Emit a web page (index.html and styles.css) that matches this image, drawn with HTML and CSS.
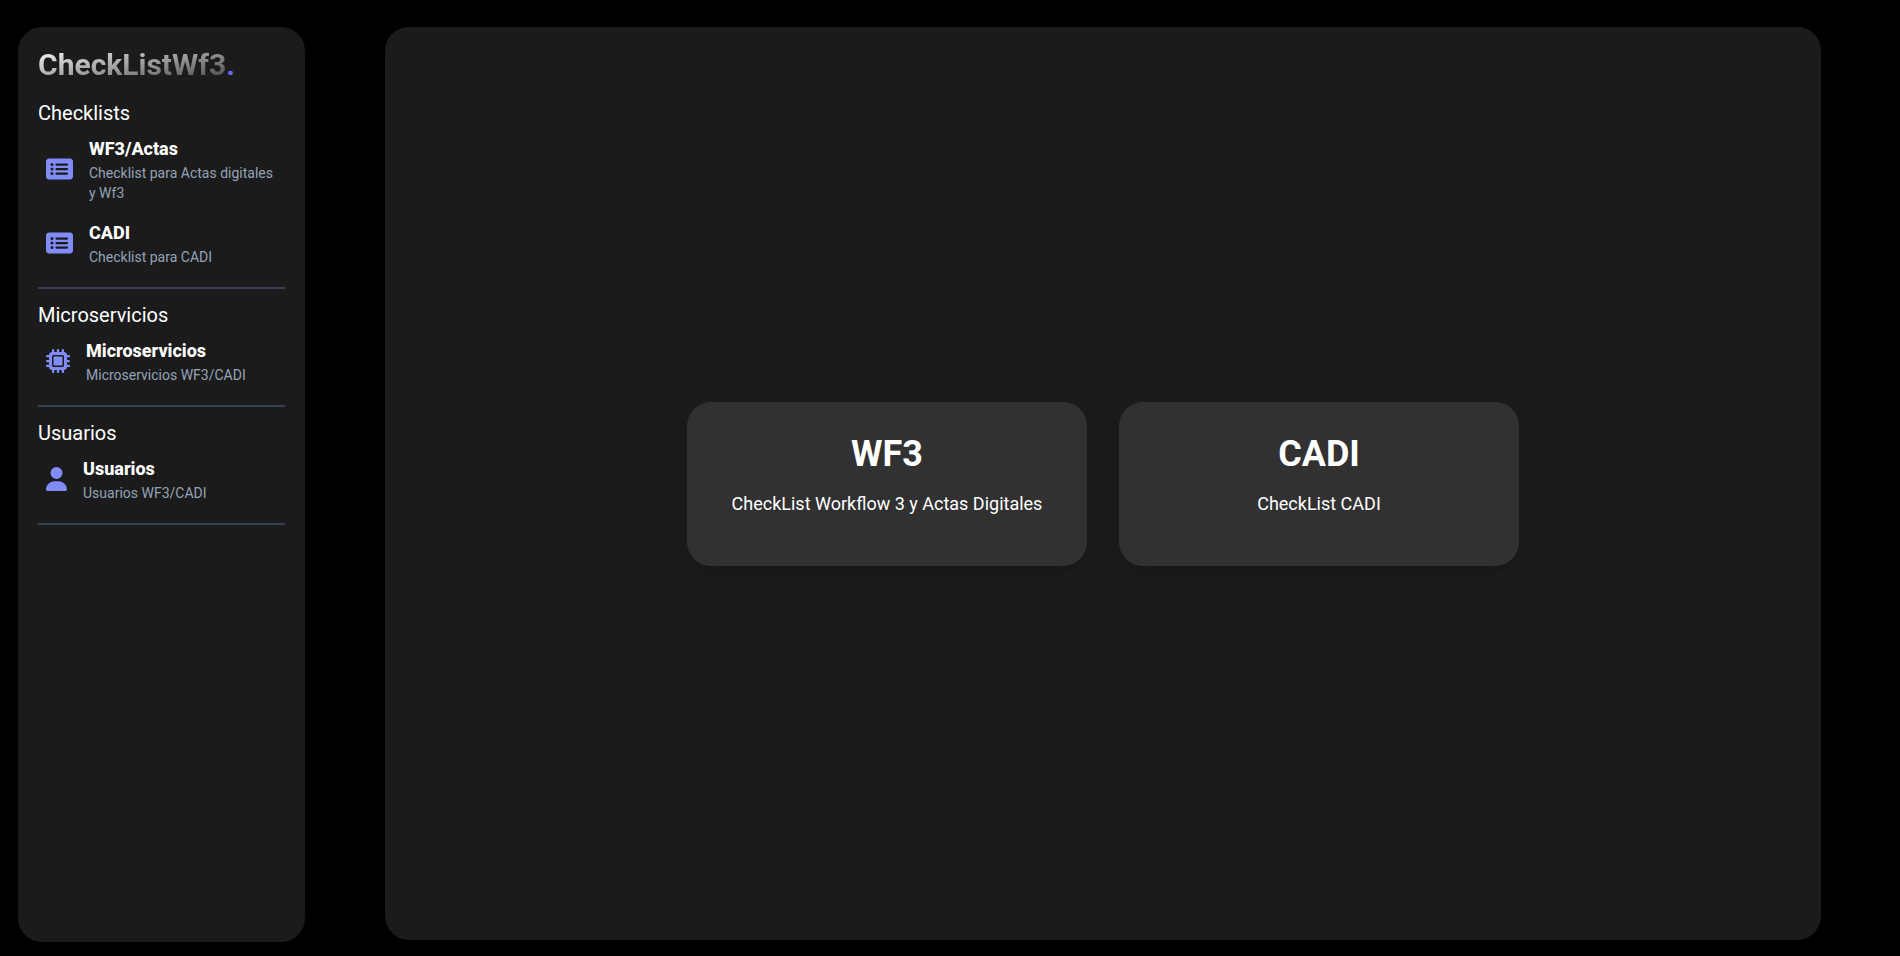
FILE: index.html
```html
<!DOCTYPE html>
<html lang="es">
<head>
<meta charset="utf-8">
<meta name="viewport" content="width=device-width, initial-scale=1">
<title>CheckListWf3</title>
<link rel="stylesheet" href="styles.css">
</head>
<body>
<svg class="sprite" aria-hidden="true">
  <symbol id="icon-list" viewBox="0 0 576 512"><path d="M0 96C0 60.7 28.7 32 64 32H512c35.3 0 64 28.7 64 64V416c0 35.3-28.7 64-64 64H64c-35.3 0-64-28.7-64-64V96zM128 288a32 32 0 1 0 0-64 32 32 0 1 0 0 64zm32-128a32 32 0 1 0 -64 0 32 32 0 1 0 64 0zM128 384a32 32 0 1 0 0-64 32 32 0 1 0 0 64zm96-248c-13.3 0-24 10.7-24 24s10.7 24 24 24H448c13.3 0 24-10.7 24-24s-10.7-24-24-24H224zm0 96c-13.3 0-24 10.7-24 24s10.7 24 24 24H448c13.3 0 24-10.7 24-24s-10.7-24-24-24H224zm0 96c-13.3 0-24 10.7-24 24s10.7 24 24 24H448c13.3 0 24-10.7 24-24s-10.7-24-24-24H224z"/></symbol>
  <symbol id="icon-chip" viewBox="0 0 512 512"><path d="M176 24c0-13.3-10.7-24-24-24s-24 10.7-24 24V64c-35.3 0-64 28.7-64 64H24c-13.3 0-24 10.7-24 24s10.7 24 24 24H64v56H24c-13.3 0-24 10.7-24 24s10.7 24 24 24H64v56H24c-13.3 0-24 10.7-24 24s10.7 24 24 24H64c0 35.3 28.7 64 64 64v40c0 13.3 10.7 24 24 24s24-10.7 24-24V448h56v40c0 13.3 10.7 24 24 24s24-10.7 24-24V448h56v40c0 13.3 10.7 24 24 24s24-10.7 24-24V448c35.3 0 64-28.7 64-64h40c13.3 0 24-10.7 24-24s-10.7-24-24-24H448V280h40c13.3 0 24-10.7 24-24s-10.7-24-24-24H448V176h40c13.3 0 24-10.7 24-24s-10.7-24-24-24H448c0-35.3-28.7-64-64-64V24c0-13.3-10.7-24-24-24s-24 10.7-24 24V64H280V24c0-13.3-10.7-24-24-24s-24 10.7-24 24V64H176V24zM160 128H352c17.7 0 32 14.3 32 32V352c0 17.7-14.3 32-32 32H160c-17.7 0-32-14.3-32-32V160c0-17.7 14.3-32 32-32zm192 32H160V352H352V160z"/></symbol>
  <symbol id="icon-user" viewBox="0 0 448 512"><path d="M224 256A128 128 0 1 0 224 0a128 128 0 1 0 0 256zm-45.7 48C79.8 304 0 383.8 0 482.3C0 498.7 13.3 512 29.7 512H418.3c16.4 0 29.7-13.3 29.7-29.7C448 383.8 368.2 304 269.7 304H178.3z"/></symbol>
</svg>
<div class="layout">
  <aside class="sidebar">
    <h1 class="brand"><span class="brand-name">CheckListWf3</span><span class="brand-dot">.</span></h1>
    <nav class="menu">
      <section class="group">
        <h2 class="group-title">Checklists</h2>
        <a class="item" href="#wf3">
          <svg class="icon icon-wide" aria-hidden="true"><use href="#icon-list"/></svg>
          <span class="item-text"><span class="item-title">WF3/Actas</span><span class="item-note">Checklist para Actas digitales y Wf3</span></span>
        </a>
        <a class="item" href="#cadi">
          <svg class="icon icon-wide" aria-hidden="true"><use href="#icon-list"/></svg>
          <span class="item-text"><span class="item-title">CADI</span><span class="item-note">Checklist para CADI</span></span>
        </a>
      </section>
      <section class="group">
        <h2 class="group-title">Microservicios</h2>
        <a class="item" href="#microservicios">
          <svg class="icon" aria-hidden="true"><use href="#icon-chip"/></svg>
          <span class="item-text"><span class="item-title">Microservicios</span><span class="item-note">Microservicios WF3/CADI</span></span>
        </a>
      </section>
      <section class="group">
        <h2 class="group-title">Usuarios</h2>
        <a class="item" href="#usuarios">
          <svg class="icon icon-narrow" aria-hidden="true"><use href="#icon-user"/></svg>
          <span class="item-text"><span class="item-title">Usuarios</span><span class="item-note">Usuarios WF3/CADI</span></span>
        </a>
      </section>
    </nav>
  </aside>
  <main class="content">
    <a class="card" id="wf3" href="#wf3">
      <h2 class="card-title">WF3</h2>
      <p class="card-text">CheckList Workflow 3 y Actas Digitales</p>
    </a>
    <a class="card" id="cadi" href="#cadi">
      <h2 class="card-title">CADI</h2>
      <p class="card-text">CheckList CADI</p>
    </a>
  </main>
</div>
</body>
</html>
```

FILE: styles.css
```css
* {
  box-sizing: border-box;
  margin: 0;
}

body {
  background: #000;
  color: #fff;
  font-family: Roboto, "Liberation Sans", sans-serif;
}

a {
  color: inherit;
  text-decoration: none;
}

.sprite {
  display: none;
}

.layout {
  display: flex;
  gap: 80px;
  min-height: 100vh;
  padding: 27px 79px 14px 18px;
}

.sidebar {
  flex: 0 0 287px;
  padding: 20px;
  border-radius: 24px;
  background: #1b1b1b;
}

.brand {
  margin-bottom: 16px;
  font-size: 30px;
  font-weight: 700;
  line-height: 36px;
}

.brand-name {
  background: linear-gradient(to bottom right, #fff, #404040);
  background-clip: text;
  -webkit-background-clip: text;
  color: transparent;
}

.brand-dot {
  color: #6366f1;
}

.group {
  margin-bottom: 12px;
  padding-bottom: 12px;
  border-bottom: 2px solid #374151;
}

.group-title {
  font-size: 20px;
  font-weight: 400;
  line-height: 28px;
}

.item {
  display: flex;
  align-items: center;
  gap: 16px;
  padding: 8px;
}

.icon {
  flex: none;
  width: 24px;
  height: 24px;
  fill: #818cf8;
}

.icon-wide {
  width: 27px;
}

.icon-narrow {
  width: 21px;
}

.item-text {
  display: flex;
  flex-direction: column;
}

.item-title {
  font-size: 18px;
  font-weight: 800;
  line-height: 28px;
}

.item-note {
  color: #94a3b8;
  font-size: 14px;
  line-height: 20px;
}

.content {
  display: flex;
  flex: 1;
  align-items: center;
  justify-content: center;
  gap: 32px;
  margin-bottom: 2px;
  border-radius: 24px;
  background: #1b1b1b;
}

.card {
  width: 400px;
  padding: 32px 24px 48px;
  border-radius: 24px;
  background: #313131;
  box-shadow: 0 10px 15px -3px rgb(0 0 0 / 10%), 0 4px 6px -4px rgb(0 0 0 / 10%);
  text-align: center;
}

.card-title {
  margin-bottom: 16px;
  font-size: 36px;
  font-weight: 700;
  line-height: 40px;
}

.card-text {
  font-size: 18px;
  line-height: 28px;
}
```
